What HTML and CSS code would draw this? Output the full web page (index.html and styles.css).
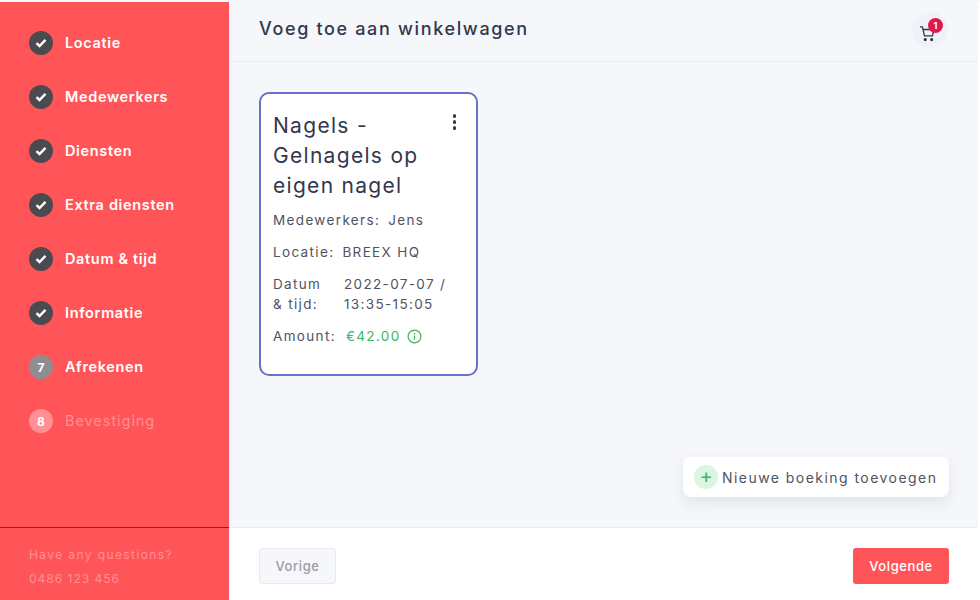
FILE: index.html
```html
<!DOCTYPE html>
<html>
<head>
<meta name="viewport" content="width=device-width, initial-scale=1">
<link rel="stylesheet" href="styles.css">
</head>
<body>
<div class="app">

  <div class="side">
    <div class="steps">
      <div class="step"><span class="dot done"><svg width="12" height="10" viewBox="0 0 12 10"><path d="M1.5 5.2 4.5 8 10.5 1.8" fill="none" stroke="#fff" stroke-width="2.4"/></svg></span><span class="name">Locatie</span></div>
      <div class="step"><span class="dot done"><svg width="12" height="10" viewBox="0 0 12 10"><path d="M1.5 5.2 4.5 8 10.5 1.8" fill="none" stroke="#fff" stroke-width="2.4"/></svg></span><span class="name">Medewerkers</span></div>
      <div class="step"><span class="dot done"><svg width="12" height="10" viewBox="0 0 12 10"><path d="M1.5 5.2 4.5 8 10.5 1.8" fill="none" stroke="#fff" stroke-width="2.4"/></svg></span><span class="name">Diensten</span></div>
      <div class="step"><span class="dot done"><svg width="12" height="10" viewBox="0 0 12 10"><path d="M1.5 5.2 4.5 8 10.5 1.8" fill="none" stroke="#fff" stroke-width="2.4"/></svg></span><span class="name">Extra diensten</span></div>
      <div class="step"><span class="dot done"><svg width="12" height="10" viewBox="0 0 12 10"><path d="M1.5 5.2 4.5 8 10.5 1.8" fill="none" stroke="#fff" stroke-width="2.4"/></svg></span><span class="name">Datum &amp; tijd</span></div>
      <div class="step"><span class="dot done"><svg width="12" height="10" viewBox="0 0 12 10"><path d="M1.5 5.2 4.5 8 10.5 1.8" fill="none" stroke="#fff" stroke-width="2.4"/></svg></span><span class="name">Informatie</span></div>
      <div class="step"><span class="dot now">7</span><span class="name">Afrekenen</span></div>
      <div class="step off"><span class="dot next">8</span><span class="name">Bevestiging</span></div>
    </div>
    <div class="help">
      <p>Have any questions?</p>
      <p class="phone">0486 123 456</p>
    </div>
  </div>

  <div class="main">
    <div class="top">
      <h1>Voeg toe aan winkelwagen</h1>
      <div class="cart">
        <svg class="cart-icon" width="17" height="17" viewBox="0 0 18 18" fill="none" stroke="#33374d" stroke-width="1.4"><path d="M1 2h2.6l2.2 9.6h8.4l1.8-6.8H4.4"/><circle cx="6.6" cy="15.4" r="1" fill="#33374d"/><circle cx="13.4" cy="15.4" r="1" fill="#33374d"/></svg>
        <span class="badge">1</span>
      </div>
    </div>

    <div class="content">
      <div class="card">
        <div class="card-head">
          <h2>Nagels - Gelnagels op eigen nagel</h2>
          <div class="more"><i></i><i></i><i></i></div>
        </div>
        <div class="row"><span>Medewerkers:</span><span>Jens</span></div>
        <div class="row"><span>Locatie:</span><span>BREEX HQ</span></div>
        <div class="row date"><span class="lbl">Datum &amp; tijd:</span><span class="val">2022-07-07 / 13:35-15:05</span></div>
        <div class="row"><span>Amount:</span><span class="price">€42.00
          <svg width="15" height="15" viewBox="0 0 15 15" fill="none" stroke="#3fb45f" stroke-width="1.2"><circle cx="7.5" cy="7.5" r="6.4"/><path d="M7.5 6.6v4.2M7.5 4v1.4"/></svg></span></div>
      </div>
      <div class="add"><span class="plus">+</span>Nieuwe boeking toevoegen</div>
    </div>

    <div class="foot">
      <button class="prev">Vorige</button>
      <button class="next-btn">Volgende</button>
    </div>
  </div>

</div>
</body>
</html>
```

FILE: styles.css
```css
* {box-sizing: border-box;}
html, body {height: 100%;}
body {margin: 0; padding-top: 2px; background: #f5f7fb; font-family: Inter, "Liberation Sans", sans-serif; overflow: hidden;}
p, h1, h2 {margin: 0; font-weight: 400;}

.app {display: flex; height: 598px;}

.side {
  width: 229px;
  flex-shrink: 0;
  background: #ff5559;
  display: flex;
  flex-direction: column;
  justify-content: space-between;
}
.steps {padding: 29px 0 0 29px;}
.step {
  display: flex;
  align-items: center;
  gap: 12px;
  height: 24px;
  margin-bottom: 30px;
  color: #fff;
  font-size: 14.5px;
  font-weight: 600;
  letter-spacing: .65px;
}
.step .name {margin-top: -2px;}
.step.off {color: rgba(255,255,255,.35); font-weight: 400; letter-spacing: .95px;}
.dot {
  width: 24px;
  height: 24px;
  border-radius: 50%;
  display: flex;
  align-items: center;
  justify-content: center;
  font-size: 12px;
  font-weight: 700;
  letter-spacing: 0;
  color: #fff;
}
.dot.done {background: #4b4b4f;}
.dot.now {background: #8e8e90;}
.dot.next {background: rgba(255,255,255,.35);}
.help {
  height: 73px;
  border-top: 1px solid #5c3a3c;
  padding: 15px 0 0 29px;
  color: rgba(255,255,255,.36);
  font-size: 12px;
  font-weight: 600;
  letter-spacing: 1.4px;
  line-height: 24px;
}
.help .phone {letter-spacing: 1px;}

.main {flex: 1; display: flex; flex-direction: column; min-width: 0; border-right: 2px solid #fff;}

.top {
  height: 60px;
  border-bottom: 1px solid #e8ebf0;
  padding: 0 30px 6px 30px;
  display: flex;
  align-items: center;
  justify-content: space-between;
}
.top h1 {font-size: 18px; font-weight: 500; color: #33374d; letter-spacing: 1.65px;}
.cart {
  position: relative;
  width: 36px;
  height: 36px;
  margin-top: 2px;
  border-radius: 50%;
  background: #eff2f6;
  display: flex;
  align-items: center;
  justify-content: center;
}
.cart-icon {margin: 8px 5px 0 0;}
.badge {
  position: absolute;
  top: 6px;
  right: 5px;
  width: 15px;
  height: 15px;
  border-radius: 50%;
  background: #e3174f;
  color: #fff;
  font-size: 9px;
  font-weight: 700;
  text-align: center;
  line-height: 15px;
}

.content {flex: 1; position: relative; padding: 30px;}
.card {
  width: 219px;
  height: 284px;
  background: #fff;
  border: 2px solid #6c6fc9;
  border-radius: 10px;
  padding: 12px 12px 0;
  color: #50535f;
  font-size: 13.5px;
  letter-spacing: 1.35px;
}
.card-head {display: flex; justify-content: space-between; margin-bottom: 9px;}
.card-head h2 {width: 160px; margin-top: 5px; font-size: 21px; line-height: 30px; color: #33374d; letter-spacing: 1.3px;}
.more {display: flex; flex-direction: column; gap: 2.5px; padding: 8px 8px 0 0;}
.more i {display: block; width: 3.5px; height: 3.5px; border-radius: 50%; background: #33374d;}
.row {display: flex; gap: 8px; line-height: 20px; margin-bottom: 12px;}
.row.date .lbl {width: 63px; flex-shrink: 0;}
.price {color: #3fb45f; display: flex; align-items: center; gap: 6px; margin-left: 2px;}

.add {
  position: absolute;
  right: 29px;
  bottom: 30px;
  height: 40px;
  width: 266px;
  padding-left: 11px;
  background: #fff;
  border-radius: 8px;
  box-shadow: 0 6px 14px rgba(40,60,90,.1);
  display: flex;
  align-items: center;
  gap: 4px;
  color: #50535f;
  font-size: 14px;
  letter-spacing: 1.45px;
}
.plus {
  width: 24px;
  height: 24px;
  border-radius: 50%;
  background: #dcf5e2;
  color: #3fb45f;
  font-size: 20px;
  font-weight: 400;
  letter-spacing: 0;
  line-height: 23px;
  text-align: center;
}

.foot {
  height: 73px;
  background: #fff;
  border-top: 1px solid #e8ebf0;
  padding: 20px 29px 0 30px;
  display: flex;
  justify-content: space-between;
  align-items: flex-start;
}
.foot button {
  height: 36px;
  border-radius: 3px;
  font-family: inherit;
  font-size: 13px;
  font-weight: 500;
  letter-spacing: .6px;
  cursor: pointer;
}
.prev {width: 77px; background: #f5f7fb; border: 1px solid #e6e9ee; color: #9a9da6;}
.next-btn {width: 96px; background: #ff5559; border: 0; color: #fff;}
```
